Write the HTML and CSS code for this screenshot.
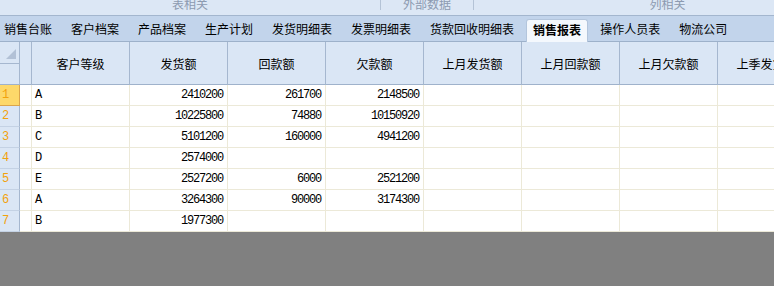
FILE: index.html
```html
<!DOCTYPE html>
<html lang="zh-CN">
	<head>
		<meta charset="UTF-8" />
		<meta name="viewport" content="width=device-width, initial-scale=1.0" />
		<title>销售报表</title>
		<link rel="stylesheet" href="styles.css">
	</head>
	<body>
		<div class="ribbon">
			<div class="group g-table"><span>表相关</span></div>
			<i class="sep"></i>
			<div class="group g-ext"><span>外部数据</span></div>
			<i class="sep"></i>
			<div class="group g-col"><span>列相关</span></div>
		</div>

		<div class="tabs">
			<span class="tab">销售台账</span>
			<span class="tab">客户档案</span>
			<span class="tab">产品档案</span>
			<span class="tab">生产计划</span>
			<span class="tab">发货明细表</span>
			<span class="tab">发票明细表</span>
			<span class="tab">货款回收明细表</span>
			<span class="tab active">销售报表</span>
			<span class="tab">操作人员表</span>
			<span class="tab">物流公司</span>
		</div>

		<div class="sheet">
			<div class="row head">
				<div class="corner">
					<div class="corner-top"><i class="tri"></i></div>
				</div>
				<div class="gap"></div>
				<div class="col">客户等级</div>
				<div class="col">发货额</div>
				<div class="col">回款额</div>
				<div class="col">欠款额</div>
				<div class="col">上月发货额</div>
				<div class="col">上月回款额</div>
				<div class="col">上月欠款额</div>
				<div class="col">上季发货额</div>
			</div>
			<div id="rows"></div>
		</div>

		<script>
			const data = [
				["A", "2410200", "261700", "2148500"],
				["B", "10225800", "74880", "10150920"],
				["C", "5101200", "160000", "4941200"],
				["D", "2574000", "", ""],
				["E", "2527200", "6000", "2521200"],
				["A", "3264300", "90000", "3174300"],
				["B", "1977300", "", ""],
			];
			const rowsElement = document.getElementById("rows");

			data.forEach((item, i) => {
				const row = document.createElement("div");
				row.className = "row";
				let html = `<div class="num${i === 0 ? " sel" : ""}">${i + 1}</div>`;
				html += `<div class="gap"></div>`;
				html += `<div class="cell">${item[0]}</div>`;
				for (let k = 1; k < 4; k++) {
					html += `<div class="cell r">${item[k]}</div>`;
				}
				for (let k = 0; k < 4; k++) {
					html += `<div class="cell"></div>`;
				}
				row.innerHTML = html;
				rowsElement.appendChild(row);
			});
		</script>
	</body>
</html>
```

FILE: styles.css
```css
body {
	margin: 0;
	width: 774px;
	height: 286px;
	overflow: hidden;
	background-color: #808080;
	font-family: "Noto Sans CJK SC", sans-serif;
	font-size: 12px;
	color: #000;
}
.ribbon {
	display: flex;
	height: 15px;
	overflow: hidden;
	background-color: #dce7f5;
}
.group {
	flex: none;
	text-align: center;
	color: #8c9ab0;
}
.group span {
	display: block;
	line-height: 12px;
	margin-top: -2px;
}
.g-table {
	width: 380px;
}
.g-ext {
	width: 92px;
}
.g-col {
	width: 387px;
}
.sep {
	flex: none;
	width: 1px;
	height: 10px;
	background-color: #b4c3d6;
}
.tabs {
	display: flex;
	gap: 19px;
	height: 25px;
	padding-left: 4px;
	white-space: nowrap;
	background-color: #c2d4eb;
	border-top: 1px solid #a3b6ce;
	border-bottom: 1px solid #9db1ca;
}
.tab {
	flex: none;
	line-height: 25px;
}
.tab.active {
	align-self: flex-start;
	box-sizing: border-box;
	height: 23px;
	margin: 3px -7px 0;
	padding: 0 6px;
	line-height: 19px;
	font-weight: bold;
	background-color: #f4f8fd;
	border: 1px solid #b3c5dc;
	border-bottom: none;
	border-radius: 3px 3px 0 0;
}
.row {
	display: grid;
	grid-template-columns: 20px 12px repeat(8, 98px);
	width: 816px;
}
.row > div {
	box-sizing: border-box;
	border-right: 1px solid #ece9d8;
	border-bottom: 1px solid #ece9d8;
	height: 21px;
	background-color: #fff;
}
.head > div {
	height: 43px;
	background-color: #dae6f5;
	border-right-color: #a5b7cf;
	border-bottom-color: #9fb2cb;
}
.head .col {
	display: flex;
	align-items: center;
	justify-content: center;
}
.corner-top {
	display: flex;
	justify-content: flex-end;
	align-items: flex-end;
	box-sizing: border-box;
	height: 22px;
	padding: 0 3px 4px 0;
	border-bottom: 1px solid #a5b7cf;
}
.tri {
	width: 10px;
	height: 10px;
	background-color: #b2c1d6;
	clip-path: polygon(100% 0, 100% 100%, 0 100%);
}
.row .num {
	padding-left: 2px;
	line-height: 20px;
	font-family: "Liberation Mono", monospace;
	color: #f2a20c;
	background-color: #dae6f5;
	border-right-color: #a5b7cf;
	border-bottom-color: #c4d2e4;
}
.row .num.sel {
	background-color: #fdd86a;
	border-right-color: #dba54c;
	border-bottom-color: #dba54c;
}
.cell {
	padding: 0 4px 0 3px;
	line-height: 20px;
	font-family: "Liberation Mono", monospace;
	letter-spacing: -1.2px;
	white-space: nowrap;
	overflow: hidden;
}
.cell.r {
	text-align: right;
}
```
